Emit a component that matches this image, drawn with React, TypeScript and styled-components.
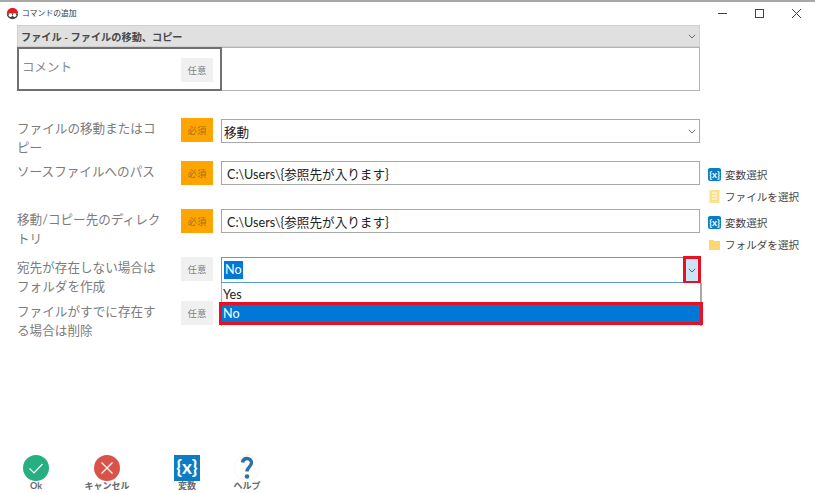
import React from "react";
import styled, { createGlobalStyle } from "styled-components";

const FONT = `Lato, "Noto Sans CJK JP", sans-serif`;

const Global = createGlobalStyle`
  html, body { margin: 0; padding: 0; background: #fff; }
  body { font-family: ${FONT}; overflow: hidden; }
`;

const Page = styled.div`
  width: 815px;
  height: 493px;
  box-sizing: border-box;
  border-top: 2px solid #a8a8a8;
  display: flex;
  flex-direction: column;
  background: #fff;
`;

const TitleBar = styled.div`
  height: 23px;
  display: flex;
  align-items: center;
  padding: 0 0 0 6px;
  flex: none;
`;
const TitleText = styled.span`
  font-size: 7.8px;
  color: #333;
  margin-left: 3px;
  margin-top: -3px;
`;
const WindowButtons = styled.div`
  margin-left: auto;
  display: flex;
  align-items: center;
`;
const WindowButton = styled.div`
  width: 37px;
  height: 20px;
  display: flex;
  align-items: center;
  justify-content: center;
`;

const TopSection = styled.div`
  margin-left: 17px;
  width: 683px;
  flex: none;
`;
const CommandBar = styled.div`
  height: 20px;
  background: #e0e0e0;
  border: 1px solid #d0d0d0;
  display: flex;
  align-items: center;
  justify-content: space-between;
  padding: 0 3px;
  font-size: 10.2px;
  font-weight: 700;
  color: #484848;
`;
const CommentRow = styled.div`
  display: flex;
  height: 44px;
`;
const CommentLeft = styled.div`
  width: 205px;
  box-sizing: border-box;
  border: 2px solid #707070;
  display: flex;
  justify-content: space-between;
  padding: 8px 7px 0 3px;
  font-size: 12.5px;
  color: #8a8a8a;
`;
const CommentInput = styled.div`
  flex: 1;
  border: 1px solid #b4b4b4;
  border-left: none;
`;

const Form = styled.div`
  margin-top: 27px;
  margin-left: 17px;
  display: flex;
  flex-direction: column;
  position: relative;
  flex: none;
`;
const Row = styled.div<{ $h: number }>`
  height: ${(p) => p.$h}px;
  display: grid;
  grid-template-columns: 164px 32px 8px 479px 8px 1fr;
  align-items: start;
`;
const Label = styled.div`
  font-size: 12.6px;
  line-height: 19px;
  color: #7c7c7c;
  width: 146px;
  margin-top: 1px;
  word-break: break-all;
`;
const Badge = styled.div<{ $required?: boolean }>`
  grid-column: 2;
  height: 24px;
  display: flex;
  align-items: center;
  justify-content: center;
  font-size: 9.4px;
  background: ${(p) => (p.$required ? "#ffa500" : "#f0f0f0")};
  color: ${(p) => (p.$required ? "#a86f1c" : "#808080")};
`;
const CommentBadge = styled(Badge)`
  width: 32px;
  margin-top: 1px;
`;
const Field = styled.div<{ $active?: boolean; $h?: number; $top?: number; $pad?: number }>`
  grid-column: 4;
  height: ${(p) => p.$h ?? 24}px;
  margin-top: ${(p) => p.$top ?? 0}px;
  box-sizing: border-box;
  border: 1px solid ${(p) => (p.$active ? "#5b9bd5" : "#a8a8a8")};
  display: flex;
  align-items: center;
  justify-content: space-between;
  padding: 0 3px 0 ${(p) => p.$pad ?? 5}px;
  font-size: 12.6px;
  color: #222;
  background: #fff;
  position: relative;
`;
const SelectedText = styled.span`
  background: #0078d7;
  color: #fff;
  margin-left: -3px;
  padding: 0 1px;
  line-height: 18px;
`;
const ArrowBox = styled.div`
  position: absolute;
  right: -2px;
  top: -2px;
  width: 18px;
  height: 28px;
  box-sizing: border-box;
  border: 3px solid #e81123;
  background: #cde4f7;
  display: flex;
  align-items: center;
  justify-content: center;
`;
const SideLinks = styled.div`
  grid-column: 6;
  display: flex;
  flex-direction: column;
  margin-top: 4px;
  gap: 4px;
`;
const SideLink = styled.div`
  display: flex;
  align-items: center;
  gap: 4px;
  font-size: 10.6px;
  color: #444;
  height: 18px;
  white-space: nowrap;
`;
const IconSlot = styled.span`
  width: 13px;
  display: flex;
  justify-content: center;
`;
const Dropdown = styled.div`
  position: absolute;
  left: 204px;
  top: 165px;
  width: 481px;
  height: 43px;
  box-sizing: border-box;
  background: #fff;
  border-left: 1px solid #b0b0b0;
  border-right: 2px solid #a8a8a8;
  font-size: 12.6px;
  color: #222;
`;
const DropItem = styled.div`
  height: 21px;
  line-height: 23px;
  padding-left: 1px;
`;
const DropSelected = styled.div`
  position: absolute;
  left: -3px;
  top: 19px;
  width: 484px;
  height: 23px;
  box-sizing: border-box;
  border: 3px solid #e81123;
  background: #0078d7;
  color: #fff;
  line-height: 17px;
  padding-left: 1px;
`;

const Footer = styled.div`
  margin-top: auto;
  height: 38px;
  display: grid;
  grid-template-columns: 72px 70px 90px 30px;
  flex: none;
`;
const FootButton = styled.div`
  display: flex;
  flex-direction: column;
  align-items: center;
  font-size: 9px;
  font-weight: 700;
  color: #666;
  line-height: 10px;
  white-space: nowrap;
`;

const RedBall = () => (
  <svg width="13" height="13" viewBox="0 0 16 16">
    <path d="M1 8a7 7 0 0 1 14 0z" fill="#e02020" />
    <path d="M1 8a7 7 0 0 0 14 0z" fill="#444" />
    <circle cx="5.5" cy="10" r="2.2" fill="#fff" />
    <circle cx="10.5" cy="10" r="2.2" fill="#fff" />
  </svg>
);
const Chevron = ({ color = "#666", size = 8 }: { color?: string; size?: number }) => (
  <svg width={size} height={size * 0.6} viewBox="0 0 10 6">
    <path d="M1 1l4 4 4-4" fill="none" stroke={color} strokeWidth="1.2" />
  </svg>
);
const VarIcon = ({ size = 13 }: { size?: number }) => (
  <svg width={size} height={size} viewBox="0 0 26 26">
    <rect width="26" height="26" rx={size > 20 ? 0 : 4} fill="#0d7cc4" />
    <text x="13" y="19" textAnchor="middle" fontSize="19" fontWeight="700" fill="#fff" fontFamily="Lato, sans-serif">
      {"{x}"}
    </text>
  </svg>
);
const FileIcon = () => (
  <svg width="11" height="13" viewBox="0 0 11 13">
    <rect x="0.5" width="10" height="13" fill="#fde08a" />
    <path d="M3 3h5M3 6h5M3 9h5" stroke="#fff" strokeWidth="1" />
  </svg>
);
const FolderIcon = () => (
  <svg width="11" height="11" viewBox="0 0 11 11">
    <path d="M0 1h4l1 1h6v9H0z" fill="#fdd772" />
  </svg>
);

function Links({ second, icon }: { second: string; icon: React.ReactNode }) {
  return (
    <SideLinks>
      <SideLink><VarIcon />変数選択</SideLink>
      <SideLink><IconSlot>{icon}</IconSlot>{second}</SideLink>
    </SideLinks>
  );
}

export default function App() {
  return (
    <Page>
      <Global />
      <TitleBar>
        <RedBall />
        <TitleText>コマンドの追加</TitleText>
        <WindowButtons>
          <WindowButton>
            <svg width="9" height="9" viewBox="0 0 9 9"><path d="M0 4.5h9" stroke="#444" /></svg>
          </WindowButton>
          <WindowButton>
            <svg width="9" height="9" viewBox="0 0 9 9"><rect x=".5" y=".5" width="8" height="8" fill="none" stroke="#444" /></svg>
          </WindowButton>
          <WindowButton>
            <svg width="9" height="9" viewBox="0 0 9 9"><path d="M0 0l9 9M9 0L0 9" stroke="#444" /></svg>
          </WindowButton>
        </WindowButtons>
      </TitleBar>
      <TopSection>
        <CommandBar>
          <span>ファイル - ファイルの移動、コピー</span>
          <Chevron />
        </CommandBar>
        <CommentRow>
          <CommentLeft>
            <span>コメント</span>
            <CommentBadge>任意</CommentBadge>
          </CommentLeft>
          <CommentInput />
        </CommentRow>
      </TopSection>
      <Form>
        <Row $h={43}>
          <Label>ファイルの移動またはコピー</Label>
          <Badge $required>必須</Badge>
          <Field $top={1} $pad={2}>
            <span>移動</span>
            <Chevron />
          </Field>
        </Row>
        <Row $h={48}>
          <Label>ソースファイルへのパス</Label>
          <Badge $required>必須</Badge>
          <Field><span>C:\Users\{"{"}参照先が入ります{"}"}</span></Field>
          <Links second="ファイルを選択" icon={<FileIcon />} />
        </Row>
        <Row $h={48}>
          <Label>移動/コピー先のディレクトリ</Label>
          <Badge $required>必須</Badge>
          <Field><span>C:\Users\{"{"}参照先が入ります{"}"}</span></Field>
          <Links second="フォルダを選択" icon={<FolderIcon />} />
        </Row>
        <Row $h={44}>
          <Label>宛先が存在しない場合はフォルダを作成</Label>
          <Badge>任意</Badge>
          <Field $active $h={26}>
            <SelectedText>No</SelectedText>
            <ArrowBox><Chevron color="#555" /></ArrowBox>
          </Field>
        </Row>
        <Row $h={44}>
          <Label>ファイルがすでに存在する場合は削除</Label>
          <Badge>任意</Badge>
        </Row>
        <Dropdown>
          <DropItem>Yes</DropItem>
          <DropSelected>No</DropSelected>
        </Dropdown>
      </Form>
      <Footer>
        <FootButton>
          <svg width="26" height="26" viewBox="0 0 26 26">
            <circle cx="13" cy="13" r="13" fill="#27ae82" />
            <path d="M6.5 13.5l4.5 4.5 8.5-9" fill="none" stroke="#fff" strokeWidth="1.2" />
          </svg>
          Ok
        </FootButton>
        <FootButton>
          <svg width="26" height="26" viewBox="0 0 26 26">
            <circle cx="13" cy="13" r="13" fill="#d9534a" />
            <path d="M7.500 7.500l11 11M18.500 7.500l-11 11" fill="none" stroke="#fff" strokeWidth="1.2" />
          </svg>
          キャンセル
        </FootButton>
        <FootButton>
          <VarIcon size={26} />
          変数
        </FootButton>
        <FootButton>
          <svg width="26" height="26" viewBox="0 0 26 26">
            <circle cx="13" cy="13" r="12.500" fill="#fff" stroke="#f6f6f6" />
            <path d="M8.500 7.500c.4-2.600 2.200-4 4.500-4 2.600 0 4.500 1.800 4.500 4.300 0 4.200-4.500 4-4.500 8.700" fill="none" stroke="#2f6fa8" strokeWidth="3.400" />
            <circle cx="13" cy="21.500" r="2.300" fill="#2f6fa8" />
          </svg>
          ヘルプ
        </FootButton>
      </Footer>
    </Page>
  );
}
